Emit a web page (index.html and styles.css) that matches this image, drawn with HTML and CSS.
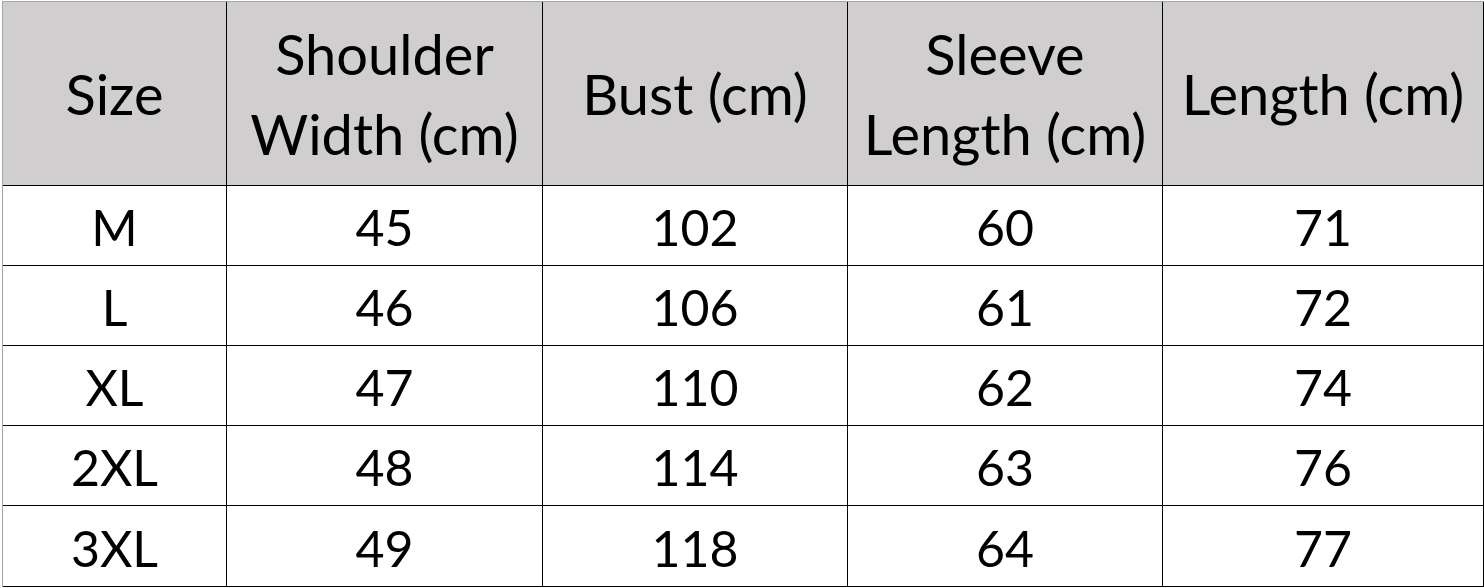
FILE: index.html
```html
<!DOCTYPE html>
<html>
<head>
<meta charset="utf-8">
<link rel="stylesheet" href="styles.css">
</head>
<body>
<div class="sheet">
  <div class="grid">
    <div class="cell head">Size</div>
    <div class="cell head">Shoulder<br>Width (cm)</div>
    <div class="cell head">Bust (cm)</div>
    <div class="cell head">Sleeve<br>Length (cm)</div>
    <div class="cell head">Length (cm)</div>

    <div class="cell">M</div><div class="cell">45</div><div class="cell">102</div><div class="cell">60</div><div class="cell">71</div>
    <div class="cell">L</div><div class="cell">46</div><div class="cell">106</div><div class="cell">61</div><div class="cell">72</div>
    <div class="cell">XL</div><div class="cell">47</div><div class="cell">110</div><div class="cell">62</div><div class="cell">74</div>
    <div class="cell">2XL</div><div class="cell">48</div><div class="cell">114</div><div class="cell">63</div><div class="cell">76</div>
    <div class="cell last">3XL</div><div class="cell last">49</div><div class="cell last">118</div><div class="cell last">64</div><div class="cell last">77</div>
  </div>
</div>
</body>
</html>
```

FILE: styles.css
```css
html, body {
  margin: 0;
  padding: 0;
  background: #ffffff;
}

.sheet {
  padding: 1px 0 0 2px;
}

.grid {
  display: grid;
  grid-template-columns: 224px 316px 305px 315px 321px;
  grid-template-rows: 184px 80px 80px 80px 80px 81px;
  border-top: 1px solid #a6a6a6;
  border-left: 1px solid #a6a6a6;
  width: max-content;
  font-family: "Lato", "Open Sans", sans-serif;
  color: #000;
}

.cell {
  box-sizing: border-box;
  border-right: 1px solid #000;
  border-bottom: 1px solid #000;
  display: flex;
  align-items: center;
  justify-content: center;
  text-align: center;
  font-size: 50px;
  line-height: 73px;
  padding-top: 4px;
}

.head {
  background: #d0cece;
  font-size: 56px;
  line-height: 80px;
  padding-top: 0;
}
```
